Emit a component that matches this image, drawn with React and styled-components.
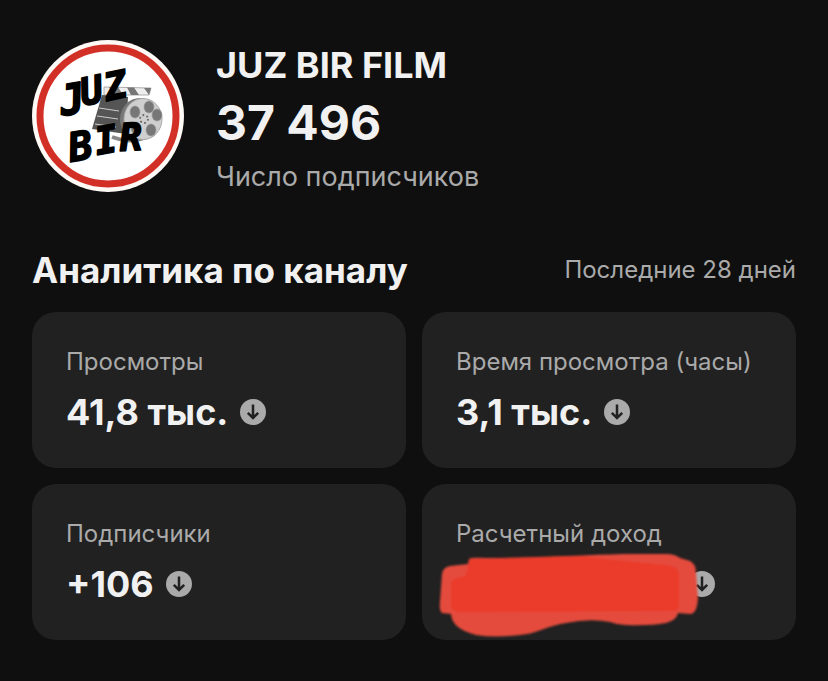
import React from 'react';
import styled, { createGlobalStyle } from 'styled-components';

const GlobalStyle = createGlobalStyle`
  body {
    margin: 0;
    background: #0f0f0f;
    color: #f1f1f1;
    font-family: Inter, 'Noto Sans', sans-serif;
  }
`

const Page = styled.main`
  padding: 40px 32px;
`

const Header = styled.header`
  display: flex;
  align-items: flex-start;
  gap: 32px;
`

const Avatar = styled.svg`
  flex: none;
  width: 152px;
  height: 152px;
`

const ChannelName = styled.h1`
  margin: 0;
  font-size: 36px;
  font-weight: 700;
  line-height: 50px;
`

const SubscriberCount = styled.div`
  font-size: 48px;
  font-weight: 700;
  line-height: 66px;
`

const SubscriberLabel = styled.div`
  color: #aaa;
  font-size: 27px;
  line-height: 42px;
`

const SectionHead = styled.div`
  display: flex;
  align-items: center;
  justify-content: space-between;
  margin: 50px 0 20px;
`

const SectionTitle = styled.h2`
  margin: 0;
  font-size: 35px;
  font-weight: 700;
  line-height: 44px;
`

const Period = styled.span`
  color: #aaa;
  font-size: 24px;
  line-height: 32px;
`

const Grid = styled.section`
  display: grid;
  grid-template-columns: repeat(2, minmax(0, 1fr));
  gap: 16px;
`

const Card = styled.article`
  padding: 34px;
  border-radius: 24px;
  background: #212121;
`

const CardLabel = styled.div`
  margin-bottom: 12px;
  color: #aaa;
  font-size: 24px;
  line-height: 32px;
  white-space: nowrap;
`

const CardValue = styled.div`
  display: flex;
  align-items: center;
  gap: 12px;
  font-size: 36px;
  font-weight: 700;
  line-height: 44px;
`

const Hidden = styled.span`
  position: relative;
  width: 221px;
  height: 44px;
`

const Scribble = styled.svg`
  position: absolute;
  z-index: 1;
  top: -12px;
  left: -26px;
  width: 280px;
  height: 100px;
`

const TrendIcon = styled.svg`
  flex: none;
  width: 26px;
  height: 26px;
`

const stats = [
  { label: 'Просмотры', value: '41,8 тыс.' },
  { label: 'Время просмотра (часы)', value: '3,1 тыс.' },
  { label: 'Подписчики', value: '+106' },
  { label: 'Расчетный доход', value: null },
];

const holes = [[103, 72], [117, 67], [125, 75], [119, 90], [104, 88]];

function Logo() {
  return (
    <Avatar viewBox="0 0 152 152">
      <circle cx="76" cy="76" r="76" fill="#fffaf6" />
      <circle cx="76" cy="76" r="68" fill="#fff" stroke="#d22f27" strokeWidth="7" />

      <path d="M72 47 119 48 117 55 72 55Z" fill="#eee" stroke="#999" strokeWidth=".8" />
      <path d="M77 47h9l5 8h-9zM95 47.5h7l5 7.5h-8zM112 48h7l-2 7z" fill="#777" />
      <path d="M70 55 96 57 94 94 60 89Z" fill="#555" />
      <path d="M67 68 87 71M65 76 86 79M63 84 84 87" stroke="#ccc" strokeWidth="1" />
      <path d="M80 97Q100 105 122 94" fill="none" stroke="#888" strokeWidth="4" />
      <ellipse cx="108" cy="79" rx="20" ry="21" fill="#777" />
      <ellipse cx="111" cy="79" rx="19" ry="20.5" fill="#cfcfcf" stroke="#aaa" />
      {holes.map(([x, y]) => (
        <ellipse key={x} cx={x} cy={y} rx="5" ry="6" fill="#777" stroke="#999" strokeWidth=".6" />
      ))}
      <circle cx="112" cy="79" r="4" fill="none" stroke="#666" strokeWidth="1.8" strokeDasharray="1.8 2.4" />

      <g
        fontFamily="'DejaVu Sans Mono', monospace"
        fontWeight="700"
        fontStyle="italic"
        fontSize="38"
        stroke="#000"
        strokeWidth="1.6"
        strokeLinejoin="round"
      >
        <text fontSize="42" transform="translate(30 76) rotate(-10)">J</text>
        <text transform="translate(51 66) rotate(-12)">U</text>
        <text transform="translate(75 61) rotate(-12)">Z</text>
        <text fontSize="40" transform="translate(39 122) rotate(-10)">B</text>
        <text transform="translate(65 115) rotate(-10)">I</text>
        <text transform="translate(88 111) rotate(-3)">R</text>
      </g>
    </Avatar>
  );
}

function ArrowDown() {
  return (
    <TrendIcon viewBox="0 0 26 26" aria-hidden="true">
      <circle cx="13" cy="13" r="13" fill="#aaa" />
      <path d="M13 5.5v14M7.8 13.8 13 19l5.2-5.2" fill="none" stroke="#212121" strokeWidth="2.5" />
    </TrendIcon>
  );
}

function HiddenValue() {
  return (
    <Hidden>
      <Scribble viewBox="0 0 280 100" aria-hidden="true">
        <defs>
          <filter id="soft" x="-5%" y="-10%" width="110%" height="120%">
            <feGaussianBlur stdDeviation="1" />
          </filter>
        </defs>
        <g filter="url(#soft)">
          <path
            d="M39 9Q42 7 55 8C100 8 155 5 194 4H236Q245 4 250 8L260 11Q266 14 266 23L268 48Q267 64 260 64L248 63Q247 70 236 73Q220 76 196 75Q188 75 180 72Q160 68 136 73C117 76 106 84 90 85Q66 88 46 85Q22 79 21 64L12 63Q9 61 10 51L12 24Q13 17 20 16L38 14Z"
            fill="#e44b3d"
          />
          <path
            d="M39 10Q42 8 55 9L150 6Q200 12 236 15Q249 16 249 25L249 55Q249 61 242 61L34 62Q21 63 21 55V33Q23 28 35 26Q38 22 39 10Z"
            fill="#eb3a2a"
          />
        </g>
      </Scribble>
    </Hidden>
  );
}

export default function App() {
  return (
    <>
      <GlobalStyle />
      <Page>
        <Header>
          <Logo />
          <div>
            <ChannelName>JUZ BIR FILM</ChannelName>
            <SubscriberCount>37 496</SubscriberCount>
            <SubscriberLabel>Число подписчиков</SubscriberLabel>
          </div>
        </Header>

        <SectionHead>
          <SectionTitle>Аналитика по каналу</SectionTitle>
          <Period>Последние 28 дней</Period>
        </SectionHead>

        <Grid>
          {stats.map(({ label, value }) => (
            <Card key={label}>
              <CardLabel>{label}</CardLabel>
              <CardValue>
                {value ? <span>{value}</span> : <HiddenValue />}
                <ArrowDown />
              </CardValue>
            </Card>
          ))}
        </Grid>
      </Page>
    </>
  );
}
